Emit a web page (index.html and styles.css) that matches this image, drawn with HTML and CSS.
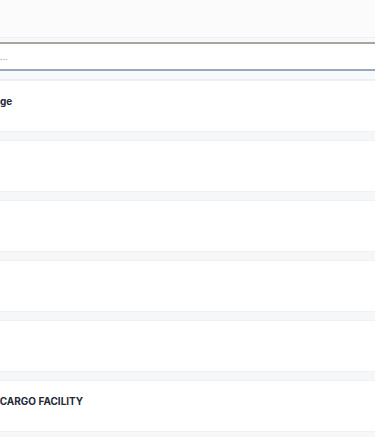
FILE: index.html
```html
<!DOCTYPE html>
<html>
<head>
<meta charset="utf-8">
<link rel="stylesheet" href="styles.css">
</head>
<body>
<div class="page">
  <header class="topbar"></header>
  <div class="search-wrap">
    <input class="search" type="text" placeholder="Search locations...">
  </div>
  <ul class="list">
    <li class="card"><span class="title">Storage</span></li>
    <li class="card"><span class="title"></span></li>
    <li class="card"><span class="title"></span></li>
    <li class="card"><span class="title"></span></li>
    <li class="card"><span class="title"></span></li>
    <li class="card"><span class="title">BAY: CARGO FACILITY</span></li>
  </ul>
</div>
</body>
</html>
```
FILE: styles.css
```css
* { box-sizing: border-box; }
html, body { margin: 0; padding: 0; }
body {
  background: #f6f7f9;
  font-family: Inter, "Liberation Sans", sans-serif;
  overflow: hidden;
}
.page {
  margin-left: -120px;
  width: 495px;
}
.topbar {
  height: 38px;
  background: #fbfbfb;
  border-bottom: 1px solid #eceef1;
}
.search-wrap {
  padding: 4px 0 8px;
  background: #f8f9fa;
  border-bottom: 1px solid #eceef1;
}
.search {
  display: block;
  width: 100%;
  height: 29px;
  border: 0;
  border-top: 2px solid #a6a69c;
  border-bottom: 2px solid #9aa7c2;
  background: #fff;
  padding: 0 0 0 49px;
  font-family: inherit;
  font-size: 9px;
  color: #111827;
  outline: none;
}
.search::placeholder { color: #a3a8b0; }
.list {
  list-style: none;
  margin: 0;
  padding: 0;
  display: flex;
  flex-direction: column;
  gap: 8px;
}
.card {
  height: 52px;
  background: #fff;
  border-top: 1px solid #eef0f3;
  border-bottom: 1px solid #eef0f3;
  padding: 14px 0 0 94px;
  font-size: 10px;
  line-height: 12px;
}
.title {
  font-size: 10px;
  font-weight: 700;
  color: #1f2937;
}
```
